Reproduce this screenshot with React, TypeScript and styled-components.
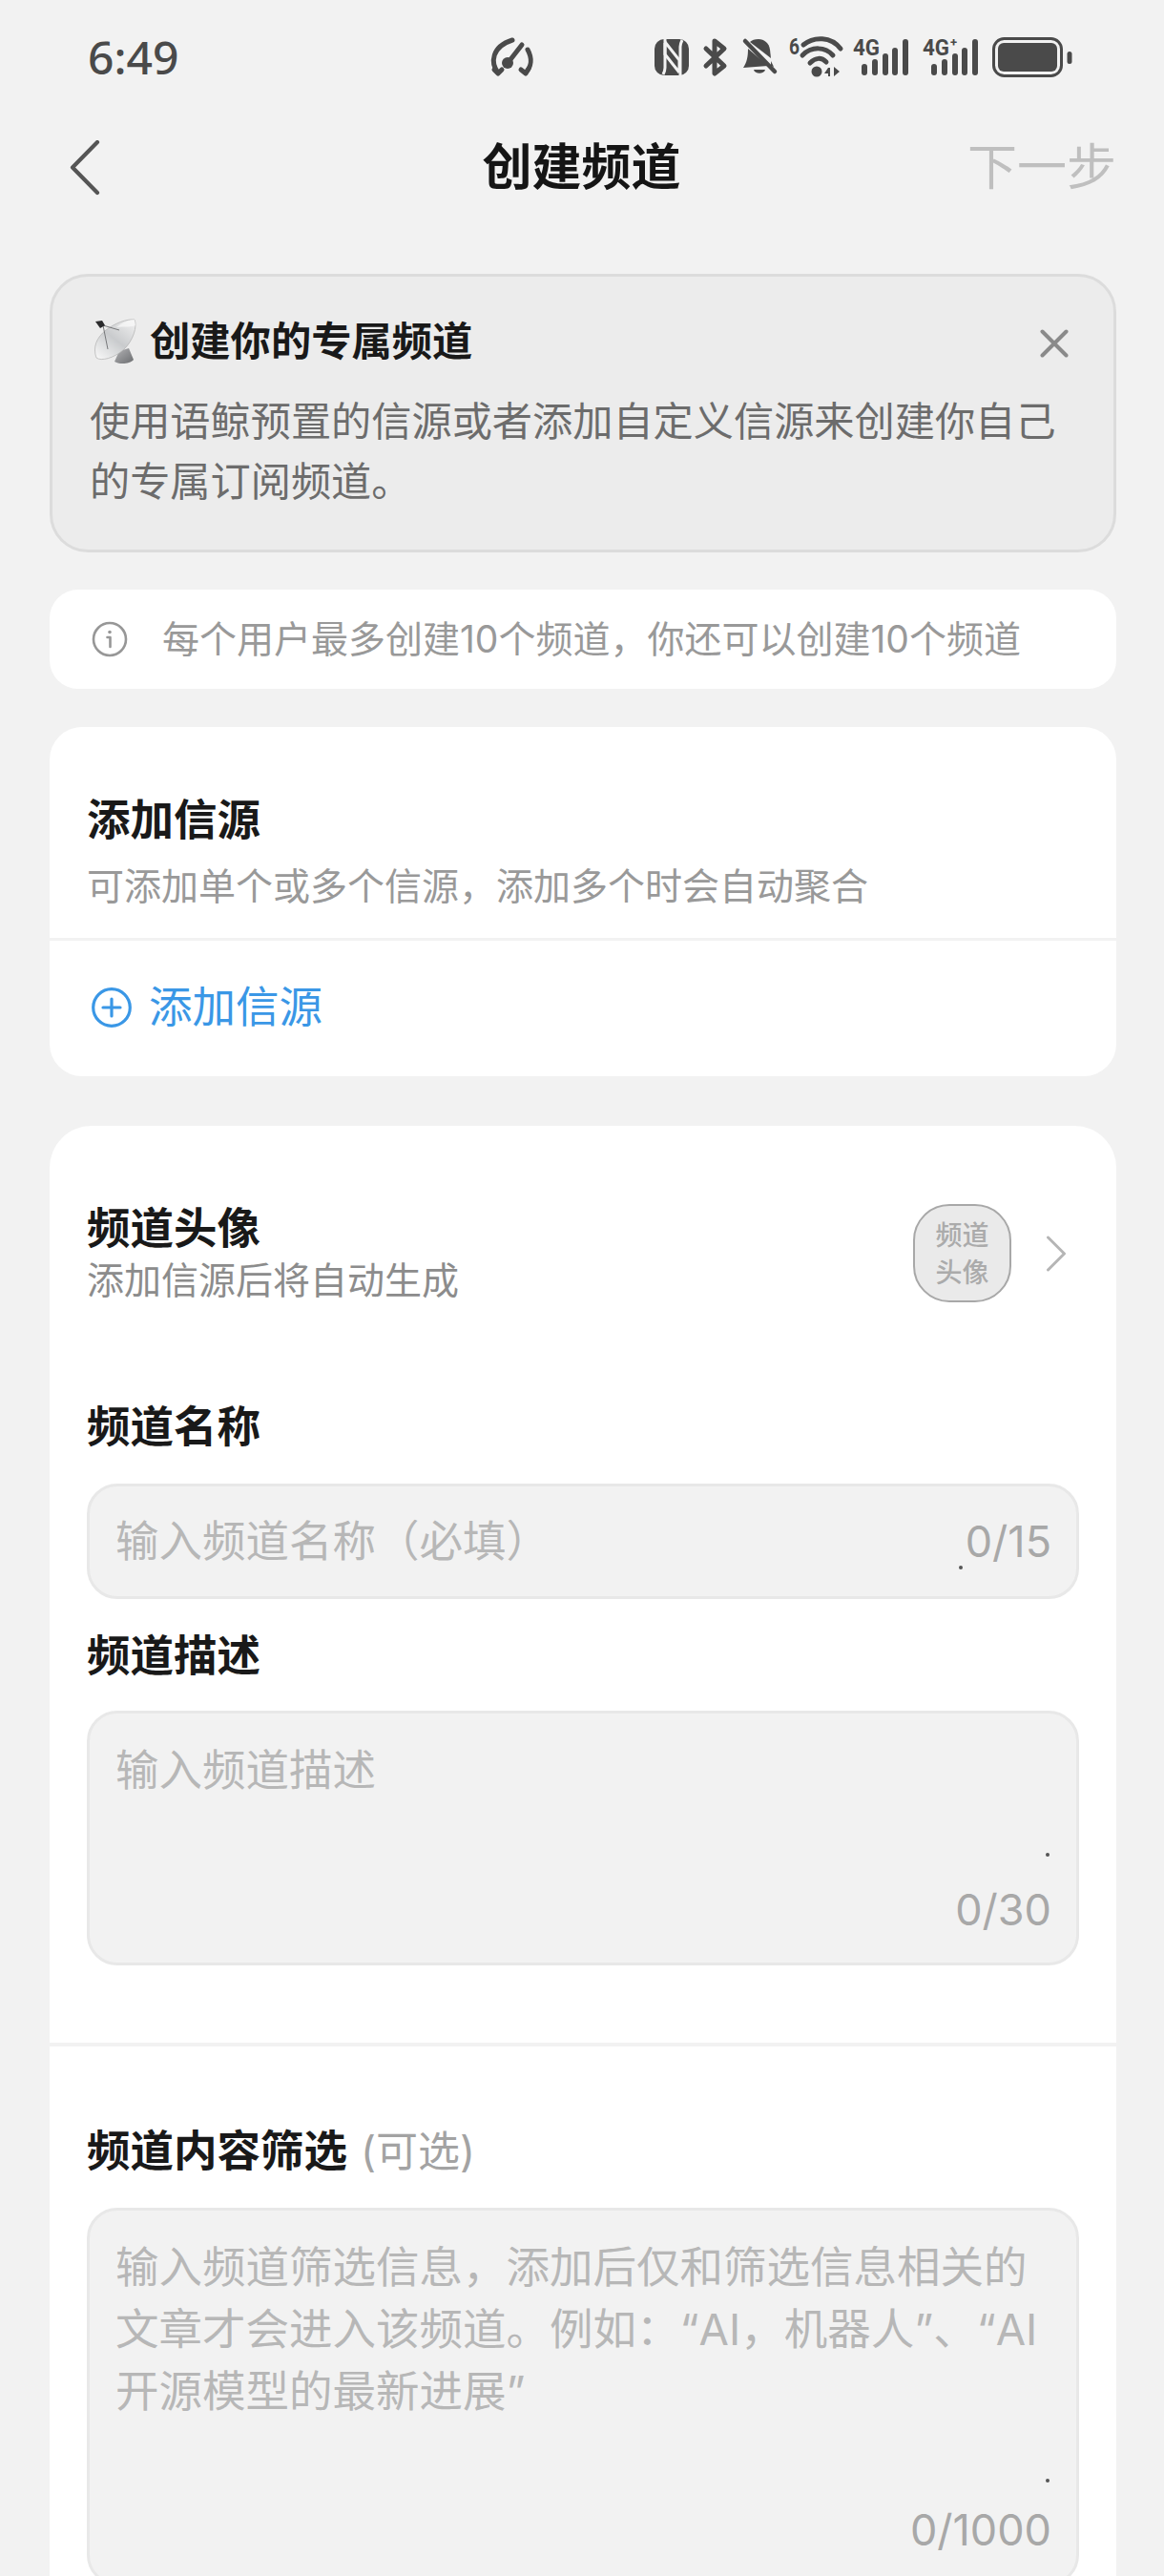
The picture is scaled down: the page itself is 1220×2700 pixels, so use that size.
import React from "react";
import styled, { createGlobalStyle } from "styled-components";

const Global = createGlobalStyle`
  html, body { margin: 0; padding: 0; background: #f2f2f2; }
  * { box-sizing: border-box; }
`;

const Page = styled.div`
  width: 1220px;
  height: 2700px;
  overflow: hidden;
  background: #f2f2f2;
  font-family: Inter, "Noto Sans CJK SC", sans-serif;
  color: #1a1a1a;
`;

const StatusBar = styled.div`
  height: 120px;
  display: flex;
  align-items: center;
  padding: 0 96px 0 92px;
  color: #4a4a4a;
`;

const Clock = styled.div`
  font-size: 48px;
  line-height: 60px;
  font-weight: 500;
  width: 424px;
  font-family: "Noto Sans", sans-serif;
`;

const StatusIcons = styled.div`
  display: flex;
  align-items: center;
`;

const StatusIcon = styled.svg<{ $gap?: number }>`
  display: block;
  overflow: visible;
  margin-right: ${(p) => p.$gap ?? 0}px;
  flex: none;
`;

const Nav = styled.div`
  height: 112px;
  display: flex;
  align-items: center;
  justify-content: space-between;
  padding: 0 50px 0 72px;
`;

const NavTitle = styled.div`
  font-size: 52px;
  font-weight: 700;
  line-height: 70px;
  color: #151515;
  margin-left: 99px;
`;

const NavAction = styled.div`
  font-size: 52px;
  line-height: 70px;
  color: #bfbfbf;
`;

const Content = styled.div`
  padding: 55px 50px 0 52px;
`;

const Banner = styled.div`
  height: 292px;
  background: #ececec;
  border: 3px solid #dcdcdc;
  border-radius: 40px;
  padding: 38px 40px 0 39px;
  position: relative;
`;

const BannerHead = styled.div`
  display: flex;
  align-items: center;
  height: 60px;
  padding-left: 4px;
`;

const BannerTitle = styled.div`
  font-size: 42.3px;
  font-weight: 700;
  line-height: 60px;
  margin-left: 13px;
  color: #191919;
`;

const BannerText = styled.div`
  font-size: 42.2px;
  line-height: 63px;
  color: #6c6c6c;
  margin-top: 22px;
  white-space: nowrap;
`;

const CloseIcon = styled.svg`
  position: absolute;
  right: 47px;
  top: 55px;
`;

const InfoCard = styled.div`
  margin-top: 39px;
  height: 104px;
  background: #fff;
  border-radius: 30px;
  display: flex;
  align-items: center;
  padding-left: 44px;
  gap: 36px;
`;

const InfoText = styled.div`
  font-size: 39px;
  line-height: 50px;
  color: #999;
  white-space: nowrap;
`;

const SourceCard = styled.div`
  margin-top: 40px;
  height: 366px;
  background: #fff;
  border-radius: 34px;
  overflow: hidden;
`;

const SourceHead = styled.div`
  padding: 68px 39px 0;
  height: 224px;
  border-bottom: 3px solid #f2f2f2;
`;

const SectionTitle = styled.div`
  font-size: 45.5px;
  font-weight: 700;
  line-height: 60px;
  color: #191919;
`;

const SubText = styled.div`
  font-size: 39px;
  line-height: 50px;
  color: #999;
  margin-top: 14px;
`;

const AddRow = styled.div`
  display: flex;
  align-items: center;
  gap: 18px;
  padding: 30px 44px 0;
`;

const AddText = styled.div`
  font-size: 45.5px;
  line-height: 80px;
  color: #3a97e6;
`;

const FormCard = styled.div`
  margin-top: 52px;
  height: 1560px;
  background: #fff;
  border-radius: 44px 44px 0 0;
`;

const FormPad = styled.div<{ $top: number }>`
  padding: ${(p) => p.$top}px 39px 0;
`;

const AvatarRow = styled.div`
  display: flex;
  align-items: center;
  justify-content: space-between;
  height: 103px;
`;

const AvatarText = styled.div`
  display: flex;
  flex-direction: column;
  gap: 8px;
  padding-top: 3px;
`;

const AvatarTitle = styled.div`
  font-size: 45.5px;
  font-weight: 700;
  line-height: 46px;
  color: #191919;
`;

const AvatarSub = styled.div`
  font-size: 39px;
  line-height: 46px;
  color: #8c8c8c;
`;

const AvatarRight = styled.div`
  display: flex;
  align-items: center;
  gap: 36px;
  margin-right: 13px;
`;

const Avatar = styled.div`
  width: 103px;
  height: 103px;
  border-radius: 38px;
  background: #eaeaea;
  border: 2px solid #a8a8a8;
  padding-top: 2px;
  display: flex;
  align-items: center;
  justify-content: center;
  text-align: center;
  font-size: 28px;
  line-height: 39px;
  font-weight: 500;
  color: #ababab;
`;

const Label = styled.div<{ $top?: number }>`
  font-size: 45.5px;
  font-weight: 700;
  line-height: 60px;
  color: #191919;
  margin-top: ${(p) => p.$top ?? 0}px;
`;

const Optional = styled.span`
  font-size: 44px;
  font-weight: 400;
  color: #a3a3a3;
  margin-left: 14px;
`;

const Field = styled.div<{ $height: number; $top: number; $single?: boolean }>`
  position: relative;
  margin-top: ${(p) => p.$top}px;
  height: ${(p) => p.$height}px;
  background: #f2f2f2;
  border: 3px solid #e8e8e8;
  border-radius: 32px;
  padding: ${(p) => (p.$single ? "0 26px 0 27px" : "27px 26px 30px 27px")};
  display: flex;
  flex-direction: ${(p) => (p.$single ? "row" : "column")};
  align-items: ${(p) => (p.$single ? "center" : "stretch")};
  justify-content: space-between;
`;

const Placeholder = styled.div`
  font-size: 45.5px;
  line-height: 65px;
  color: #b7b7b7;
  white-space: nowrap;
`;

const Count = styled.div`
  font-size: 45px;
  line-height: 50px;
  color: #a8a8a8;
  text-align: right;
`;

const Speck = styled.i<{ $x: number; $y: number }>`
  position: absolute;
  left: ${(p) => p.$x}px;
  top: ${(p) => p.$y}px;
  width: 4px;
  height: 4px;
  border-radius: 50%;
  background: #555;
`;

const Rule = styled.div`
  height: 4px;
  margin-top: 81px;
  background: #f2f2f2;
`;

const IconBox = styled.svg`
  flex: none;
  display: block;
`;

const ink = "#4a4a4a";

const SpeedIcon = () => (
  <StatusIcon width="48" height="42" viewBox="0 0 48 42" $gap={125}>
    <g fill="none" stroke={ink} strokeWidth="5" strokeLinecap="round" strokeLinejoin="round">
      <path d="M9 37 C1 27 2 10 24 3" />
      <path d="M5 34 L9 38 L13 34" />
      <path d="M40 13 C45 22 44 31 38 37" />
      <path d="M33 34 L38 38 L41 33" />
      <path d="M20 26 L34 8" />
    </g>
    <circle cx="19" cy="27" r="6" fill={ink} />
  </StatusIcon>
);

const NfcIcon = () => (
  <StatusIcon width="36" height="38" viewBox="0 0 36 38" $gap={15}>
    <rect x="0" y="0" width="36" height="38" rx="10" fill={ink} />
    <path d="M11 -1 V30 C11 33 10 35 9 37" fill="none" stroke="#f2f2f2" strokeWidth="3" />
    <path d="M27 39 V8 C27 5 28 3 29 1" fill="none" stroke="#f2f2f2" strokeWidth="3" />
    <path d="M11 3 L26 22 V34 M26 35 L11 16 V4" fill="none" stroke="#f2f2f2" strokeWidth="3" />
  </StatusIcon>
);

const BluetoothIcon = () => (
  <StatusIcon width="26" height="40" viewBox="0 0 26 40" $gap={15}>
    <path d="M3 11 L22 29 L12 37 V3 L22 11 L3 29" fill="none" stroke={ink} strokeWidth="5" strokeLinecap="round" strokeLinejoin="round" />
  </StatusIcon>
);

const BellIcon = () => (
  <StatusIcon width="36" height="40" viewBox="0 0 36 40" $gap={13}>
    <path d="M17 1 C23 1 28 5 29 12 L30 21 L8 4 C10 2 13 1 17 1 Z" fill={ink} />
    <path d="M6 11 L27 29 L1 31 C5 25 6 19 6 11 Z" fill={ink} />
    <path d="M30 24 L33 30 L30 29 Z" fill={ink} />
    <path d="M12 33 H24 C23 38 13 38 12 33 Z" fill={ink} />
    <path d="M3 3 L34 35" stroke={ink} strokeWidth="4.5" strokeLinecap="round" />
  </StatusIcon>
);

const WifiIcon = () => (
  <StatusIcon width="56" height="42" viewBox="0 0 56 42" $gap={11}>
    <text x="0" y="18" fontFamily="Roboto, sans-serif" fontWeight="700" fontSize="23" textLength="11" lengthAdjust="spacingAndGlyphs" fill={ink}>6</text>
    <g fill="none" stroke={ink} strokeWidth="5" strokeLinecap="round">
      <path d="M15 8 C26 -1 44 -1 54 12" />
      <path d="M14 19 C24 9 38 10 46 19" />
      <path d="M22 27 C28 21 34 21 39 26" />
    </g>
    <circle cx="29" cy="36" r="5.5" fill={ink} />
    <path d="M41 32 L37 38 H41 V41 H43 V32 Z M47 31 V41 L53 36 Z" fill={ink} />
  </StatusIcon>
);

const SignalIcon = ({ plus, gap }: { plus?: boolean; gap: number }) => (
  <StatusIcon width="58" height="42" viewBox="0 0 58 42" $gap={gap}>
    <text x="0" y="19" fontFamily="Roboto, sans-serif" fontWeight="700" fontSize="23" textLength="28" lengthAdjust="spacingAndGlyphs" fill={ink}>4G</text>
    {plus && <text x="29" y="10" fontFamily="Roboto, sans-serif" fontWeight="700" fontSize="13" fill={ink}>+</text>}
    <g fill={ink}>
      <rect x="9" y="28" width="6" height="12" rx="3" />
      <rect x="20" y="23" width="6" height="17" rx="3" />
      <rect x="31" y="17" width="6" height="23" rx="3" />
      <rect x="41" y="11" width="6" height="29" rx="3" />
      <rect x="52" y="2" width="6" height="38" rx="3" />
    </g>
  </StatusIcon>
);

const BatteryIcon = () => (
  <StatusIcon width="84" height="42" viewBox="0 0 84 42">
    <rect x="1.5" y="1.5" width="71" height="39" rx="11" fill="none" stroke={ink} strokeWidth="3" />
    <rect x="6" y="6" width="62" height="30" rx="6" fill={ink} />
    <rect x="78.5" y="15" width="5" height="13" rx="2.5" fill={ink} />
  </StatusIcon>
);

const DishIcon = () => (
  <IconBox width="46" height="48" viewBox="0 0 46 48">
    <defs>
      <linearGradient id="dish" x1="0.9" y1="0" x2="0.1" y2="1">
        <stop offset="0" stopColor="#efefef" />
        <stop offset="0.5" stopColor="#c9cbcd" />
        <stop offset="1" stopColor="#f6f6f6" />
      </linearGradient>
      <linearGradient id="base" x1="0" y1="0" x2="1" y2="1">
        <stop offset="0" stopColor="#b5b5b7" />
        <stop offset="1" stopColor="#6a6c6f" />
      </linearGradient>
    </defs>
    <path d="M27 34 L37 31 L42 43 C38 48 26 48 22 45 Z" fill="url(#base)" />
    <path d="M43 1 C46 8 42 23 31 33 C22 41 8 45 3 41 C-1 30 3 20 13 12 C22 5 35 0 43 1 Z" fill="url(#dish)" stroke="#b0b0b0" strokeWidth="0.7" />
    <path d="M43 1 C38 1 30 4 24 9 C34 8 41 9 44 7 Z" fill="#fafafa" opacity=".7" />
    <path d="M10 7 L27 12 M10 7 L15 32" stroke="#77787a" strokeWidth="1" fill="none" />
    <path d="M2 3 L9 2 L12 7 L7 10 Z" fill="#2b2b2d" />
  </IconBox>
);

const InfoIcon = () => (
  <IconBox width="38" height="38" viewBox="0 0 38 38">
    <circle cx="19" cy="19" r="17" fill="none" stroke="#979797" strokeWidth="2.6" />
    <circle cx="19" cy="11.5" r="1.8" fill="#979797" />
    <path d="M16.5 17 H19.5 V27" fill="none" stroke="#979797" strokeWidth="2.6" strokeLinecap="round" strokeLinejoin="round" />
  </IconBox>
);

const PlusIcon = () => (
  <IconBox width="42" height="42" viewBox="0 0 42 42">
    <circle cx="21" cy="21" r="19.3" fill="none" stroke="#3a97e6" strokeWidth="3.2" />
    <path d="M21 12 V30 M12 21 H30" stroke="#3a97e6" strokeWidth="3.2" strokeLinecap="round" />
  </IconBox>
);

export default function App() {
  return (
    <Page>
      <Global />
      <StatusBar>
        <Clock>6:49</Clock>
        <StatusIcons>
          <SpeedIcon />
          <NfcIcon />
          <BluetoothIcon />
          <BellIcon />
          <WifiIcon />
          <SignalIcon gap={15} />
          <SignalIcon plus gap={15} />
          <BatteryIcon />
        </StatusIcons>
      </StatusBar>
      <Nav>
        <IconBox width="34" height="58" viewBox="0 0 34 58">
          <path d="M30 2 L4 28.5 L30 55" fill="none" stroke="#555" strokeWidth="4.2" strokeLinecap="round" strokeLinejoin="round" />
        </IconBox>
        <NavTitle>创建频道</NavTitle>
        <NavAction>下一步</NavAction>
      </Nav>
      <Content>
        <Banner>
          <BannerHead>
            <DishIcon />
            <BannerTitle>创建你的专属频道</BannerTitle>
          </BannerHead>
          <BannerText>
            使用语鲸预置的信源或者添加自定义信源来创建你自己
            <br />
            的专属订阅频道。
          </BannerText>
          <CloseIcon width="30" height="30" viewBox="0 0 30 30">
            <path d="M2.5 2.5 L27.5 27.5 M27.5 2.5 L2.5 27.5" stroke="#8a8a8a" strokeWidth="4" strokeLinecap="round" />
          </CloseIcon>
        </Banner>
        <InfoCard>
          <InfoIcon />
          <InfoText>每个用户最多创建10个频道，你还可以创建10个频道</InfoText>
        </InfoCard>
        <SourceCard>
          <SourceHead>
            <SectionTitle>添加信源</SectionTitle>
            <SubText>可添加单个或多个信源，添加多个时会自动聚合</SubText>
          </SourceHead>
          <AddRow>
            <PlusIcon />
            <AddText>添加信源</AddText>
          </AddRow>
        </SourceCard>
        <FormCard>
          <FormPad $top={82}>
            <AvatarRow>
              <AvatarText>
                <AvatarTitle>频道头像</AvatarTitle>
                <AvatarSub>添加信源后将自动生成</AvatarSub>
              </AvatarText>
              <AvatarRight>
                <Avatar>
                  频道
                  <br />
                  头像
                </Avatar>
                <IconBox width="22" height="38" viewBox="0 0 22 38">
                  <path d="M2.5 2 L19.5 19 L2.5 36" fill="none" stroke="#b5b5b5" strokeWidth="3" strokeLinecap="round" strokeLinejoin="round" />
                </IconBox>
              </AvatarRight>
            </AvatarRow>
            <Label $top={101}>频道名称</Label>
            <Field $single $top={29} $height={121}>
              <Placeholder>输入频道名称（必填）</Placeholder>
              <Count>0/15</Count>
              <Speck $x={911} $y={83} />
            </Field>
            <Label $top={30}>频道描述</Label>
            <Field $top={27} $height={267}>
              <Placeholder>输入频道描述</Placeholder>
              <Count>0/30</Count>
              <Speck $x={1002} $y={146} />
            </Field>
          </FormPad>
          <Rule />
          <FormPad $top={80}>
            <Label>
              频道内容筛选<Optional>(可选)</Optional>
            </Label>
            <Field $top={29} $height={396}>
              <Placeholder>
                输入频道筛选信息，添加后仅和筛选信息相关的
                <br />
                文章才会进入该频道。例如：“AI，机器人”、“AI
                <br />
                开源模型的最新进展”
              </Placeholder>
              <Count>0/1000</Count>
              <Speck $x={1002} $y={281} />
            </Field>
          </FormPad>
        </FormCard>
      </Content>
    </Page>
  );
}
